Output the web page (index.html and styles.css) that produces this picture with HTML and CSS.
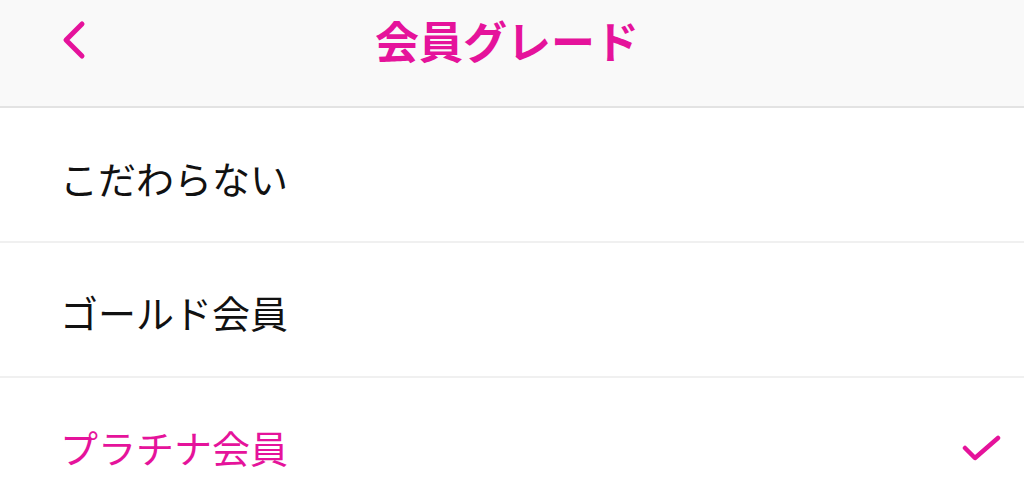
FILE: index.html
```html
<!DOCTYPE html>
<html lang="ja">
<head>
<meta charset="utf-8">
<link rel="stylesheet" href="styles.css">
</head>
<body>
<header class="nav">
  <button class="back" aria-label="戻る">
    <svg width="30" height="40" viewBox="0 0 30 40"><path d="M24 4 L8 20 L24 36" fill="none" stroke="#e5139b" stroke-width="5" stroke-linecap="round" stroke-linejoin="round"/></svg>
  </button>
  <h1 class="title">会員グレード</h1>
</header>
<ul class="list">
  <li class="row">こだわらない</li>
  <li class="row">ゴールド会員</li>
  <li class="row selected">プラチナ会員
    <svg class="check" width="40" height="30" viewBox="0 0 40 30"><path d="M3 14 L13 24 L36 4" fill="none" stroke="#e5139b" stroke-width="4.5" stroke-linecap="round" stroke-linejoin="round"/></svg>
  </li>
</ul>
</body>
</html>
```
FILE: styles.css
```css
html, body {
  margin: 0;
  padding: 0;
  background: #fff;
  font-family: "Noto Sans CJK JP", "Noto Sans", sans-serif;
}
.nav {
  height: 106px;
  background: #f9f9f9;
  border-bottom: 2px solid #e3e3e3;
  display: flex;
  align-items: flex-start;
  justify-content: center;
  position: relative;
}
.back {
  position: absolute;
  left: 58px;
  top: 20px;
  border: 0;
  background: none;
  padding: 0;
  display: flex;
}
.title {
  margin: 10px 10px 0 0;
  font-size: 44px;
  line-height: 60px;
  font-weight: 700;
  color: #e5139b;
}
.list {
  list-style: none;
  margin: 0;
  padding: 0;
}
.row {
  border-bottom: 2px solid #f0f0f0;
  display: flex;
  align-items: center;
  justify-content: space-between;
  padding: 4px 22px 0 60px;
  box-sizing: content-box;
  font-size: 38px;
  color: #111;
  height: 129px;
}
.row:first-child {
  padding-top: 6px;
  height: 127px;
}
.selected {
  color: #e5139b;
  border-bottom: none;
}
.check {
  margin-top: 4px;
}
```
